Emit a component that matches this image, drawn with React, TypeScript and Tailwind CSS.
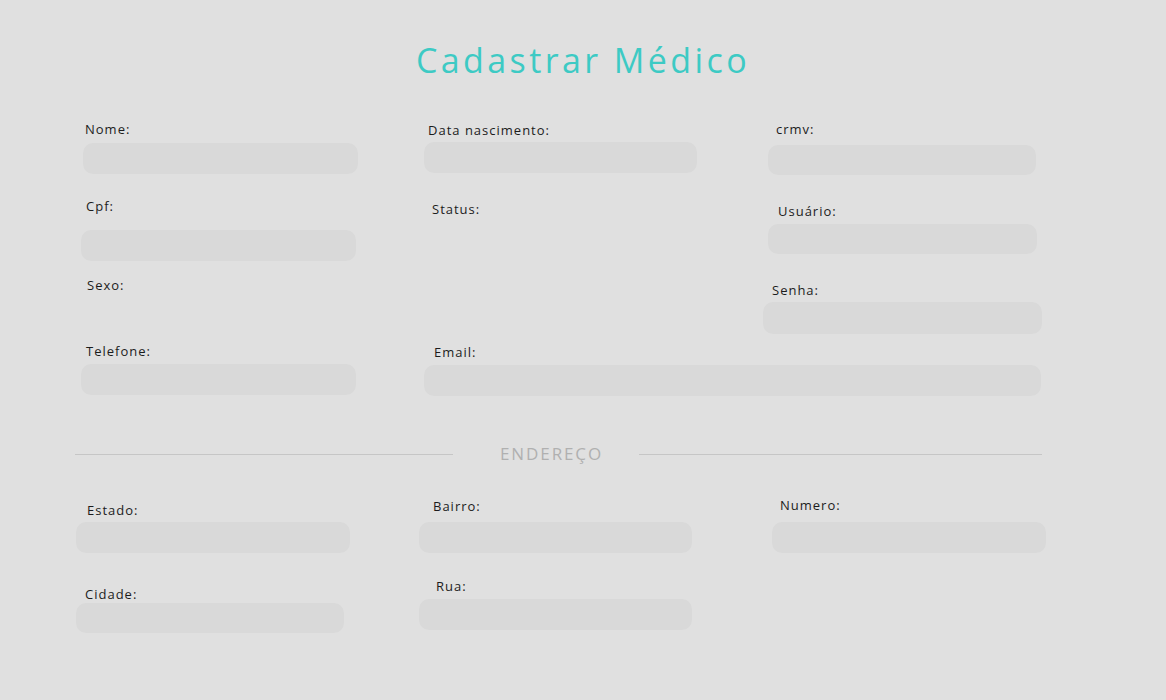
import React from 'react'

type FieldProps = {
  label: string
  labelCls: string
  inputCls?: string
  type?: string
}

function Field({ label, labelCls, inputCls, type = 'text' }: FieldProps) {
  return (
    <div className="flex flex-col items-start">
      <label className={`text-[13px] leading-[18px] text-[#1c1c1c] tracking-[1px] ${labelCls}`}>{label}</label>
      {inputCls && (
        <input
          type={type}
          className={`bg-[#d9d9d9] rounded-[10px] outline-none border-0 ${inputCls}`}
        />
      )}
    </div>
  )
}

export default function App() {
  return (
    <div
      className="w-full min-h-[700px] bg-[#e0e0e0]"
      style={{ fontFamily: '"Open Sans", "Liberation Sans", sans-serif' }}
    >
      {/* Header */}
      <h1 className="pt-[40px] text-center text-[34px] leading-[40px] font-normal tracking-[3.4px] text-[#3dcac4]">
        Cadastrar Médico
      </h1>

      {/* Dados pessoais */}
      <div className="mt-[38px] pl-[76px] grid grid-cols-[343px_344px_290px]">
        <Field label="Nome:" labelCls="ml-[9px] mt-[2px]" inputCls="ml-[7px] mt-[5px] w-[275px] h-[31px]" />
        <Field label="Data nascimento:" labelCls="ml-[9px] mt-[3px]" inputCls="ml-[5px] mt-[3px] w-[273px] h-[31px]" />
        <Field label="crmv:" labelCls="ml-[13px] mt-[2px]" inputCls="ml-[5px] mt-[7px] w-[268px] h-[30px]" />

        <Field label="Cpf:" labelCls="ml-[10px] mt-[22px]" inputCls="ml-[5px] mt-[15px] w-[275px] h-[31px]" />
        <Field label="Status:" labelCls="ml-[13px] mt-[25px]" />
        <Field label="Usuário:" labelCls="ml-[15px] mt-[27px]" inputCls="ml-[5px] mt-[4px] w-[269px] h-[30px]" />

        <Field label="Sexo:" labelCls="ml-[11px] mt-[15px]" />
        <div />
        <Field label="Senha:" labelCls="ml-[9px] mt-[20px]" inputCls="mt-[3px] w-[279px] h-[32px]" type="password" />

        <Field label="Telefone:" labelCls="ml-[10px] mt-[8px]" inputCls="ml-[5px] mt-[4px] w-[275px] h-[31px]" />
        <div className="col-span-2">
          <Field label="Email:" labelCls="ml-[15px] mt-[9px]" inputCls="ml-[5px] mt-[4px] w-[617px] h-[31px]" />
        </div>
      </div>

      {/* Divider */}
      <div className="mt-[48px] h-[20px] flex items-center">
        <div className="ml-[75px] w-[378px] h-px bg-[#c6c6c6]" />
        <div className="w-[186px] pl-[47px] text-[17px] leading-[20px] text-[#b0b0b0] tracking-[1.9px]">ENDEREÇO</div>
        <div className="w-[403px] h-px bg-[#c6c6c6]" />
      </div>

      {/* Endereço */}
      <div className="pl-[76px] grid grid-cols-[343px_344px_290px]">
        <Field label="Estado:" labelCls="ml-[11px] mt-[37px]" inputCls="mt-[3px] w-[274px] h-[31px]" />
        <Field label="Bairro:" labelCls="ml-[14px] mt-[33px]" inputCls="mt-[7px] w-[273px] h-[31px]" />
        <Field label="Numero:" labelCls="ml-[17px] mt-[32px]" inputCls="ml-[9px] mt-[8px] w-[274px] h-[31px]" />

        <Field label="Cidade:" labelCls="ml-[9px] mt-[32px]" inputCls="mt-0 w-[268px] h-[30px]" />
        <Field label="Rua:" labelCls="ml-[17px] mt-[24px]" inputCls="mt-[4px] w-[273px] h-[31px]" />
      </div>
    </div>
  )
}
